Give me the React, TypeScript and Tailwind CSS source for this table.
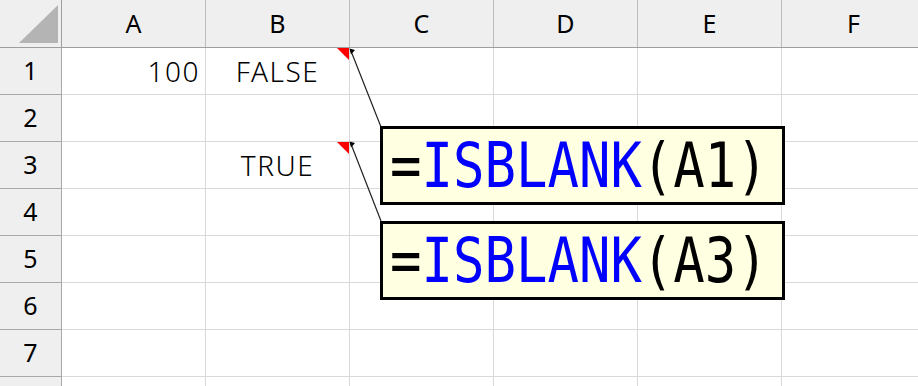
const cols = ["A", "B", "C", "D", "E", "F"];
const rows = [1, 2, 3, 4, 5, 6, 7];

type CellValue = { text: string; align: "right" | "center"; note?: boolean };

const values: Record<string, CellValue> = {
  A1: { text: "100", align: "right" },
  B1: { text: "FALSE", align: "center", note: true },
  B3: { text: "TRUE", align: "center", note: true },
};

const cellFont = { fontFamily: '"Noto Sans", "Noto Sans CJK JP", sans-serif' };

function NoteMark() {
  return (
    <div className="absolute top-0 right-0 w-[12px] h-[12px] bg-[#ff0000] [clip-path:polygon(0_0,100%_0,100%_100%)]" />
  );
}

function Cell({ id }: { id: string }) {
  const v = values[id];
  return (
    <div className="relative shrink-0 w-[144px] h-full border-r border-b border-[#d9d9d9] flex items-center px-[5px]">
      {v && (
        <span
          className={`w-full text-[28px] font-light text-black tracking-[1.5px] leading-none ${
            v.align === "right" ? "text-right" : "text-center"
          }`}
        >
          {v.text}
        </span>
      )}
      {v?.note && <NoteMark />}
    </div>
  );
}

function Comment({ fn, arg }: { fn: string; arg: string }) {
  return (
    <div className="w-[405px] h-[79px] border-[3px] border-black bg-[#ffffe1] flex items-center pl-[7px] overflow-hidden">
      <span className="inline-block whitespace-nowrap origin-left scale-x-[0.83] text-[63px] leading-none font-['DejaVu_Sans_Mono',monospace]">
        <span className="text-black">=</span>
        <span className="text-[#0000ff]">{fn}</span>
        <span className="text-black">({arg})</span>
      </span>
    </div>
  );
}

export default function App() {
  return (
    <div className="relative w-[918px] h-[386px] overflow-hidden bg-white" style={cellFont}>
      {/* column headers */}
      <div className="flex h-[48px] bg-[#efefef] border-b border-[#9e9e9e]">
        <div className="relative shrink-0 w-[62px] h-full border-r border-[#9e9e9e]">
          <div className="absolute left-[19px] top-[5px] w-[39px] h-[38px] bg-[#b4b4b4] [clip-path:polygon(100%_0,100%_100%,0_100%)]" />
        </div>
        {cols.map((c) => (
          <div
            key={c}
            className="shrink-0 w-[144px] h-full border-r border-[#bdbdbd] flex items-center justify-center text-[25px] text-black"
          >
            {c}
          </div>
        ))}
      </div>

      {/* rows */}
      {rows.map((r) => (
        <div key={r} className="flex h-[47px]">
          <div className="shrink-0 w-[62px] h-full bg-[#efefef] border-r border-b border-[#a8a8a8] flex items-center justify-center text-[25px] text-black">
            {r}
          </div>
          {cols.map((c) => (
            <Cell key={c} id={`${c}${r}`} />
          ))}
        </div>
      ))}

      {/* partial row below the fold */}
      <div className="flex h-[47px]">
        <div className="shrink-0 w-[62px] h-full bg-[#efefef] border-r border-[#a8a8a8]" />
        {cols.map((c) => (
          <div key={c} className="shrink-0 w-[144px] h-full border-r border-[#d9d9d9]" />
        ))}
      </div>

      {/* comment leader lines */}
      <svg className="absolute inset-0 pointer-events-none" width="918" height="386">
        <line x1="351" y1="51" x2="381" y2="127" stroke="#222" strokeWidth="1.2" />
        <line x1="351" y1="144" x2="381" y2="221" stroke="#222" strokeWidth="1.2" />
        <polygon points="349.5,48.5 355,50 351,54.5" fill="#000" />
        <polygon points="349.5,141.5 355,143 351,147.5" fill="#000" />
      </svg>

      {/* comment boxes */}
      <div className="absolute left-[380px] top-[126px] flex flex-col gap-[16px]">
        <Comment fn="ISBLANK" arg="A1" />
        <Comment fn="ISBLANK" arg="A3" />
      </div>
    </div>
  );
}
